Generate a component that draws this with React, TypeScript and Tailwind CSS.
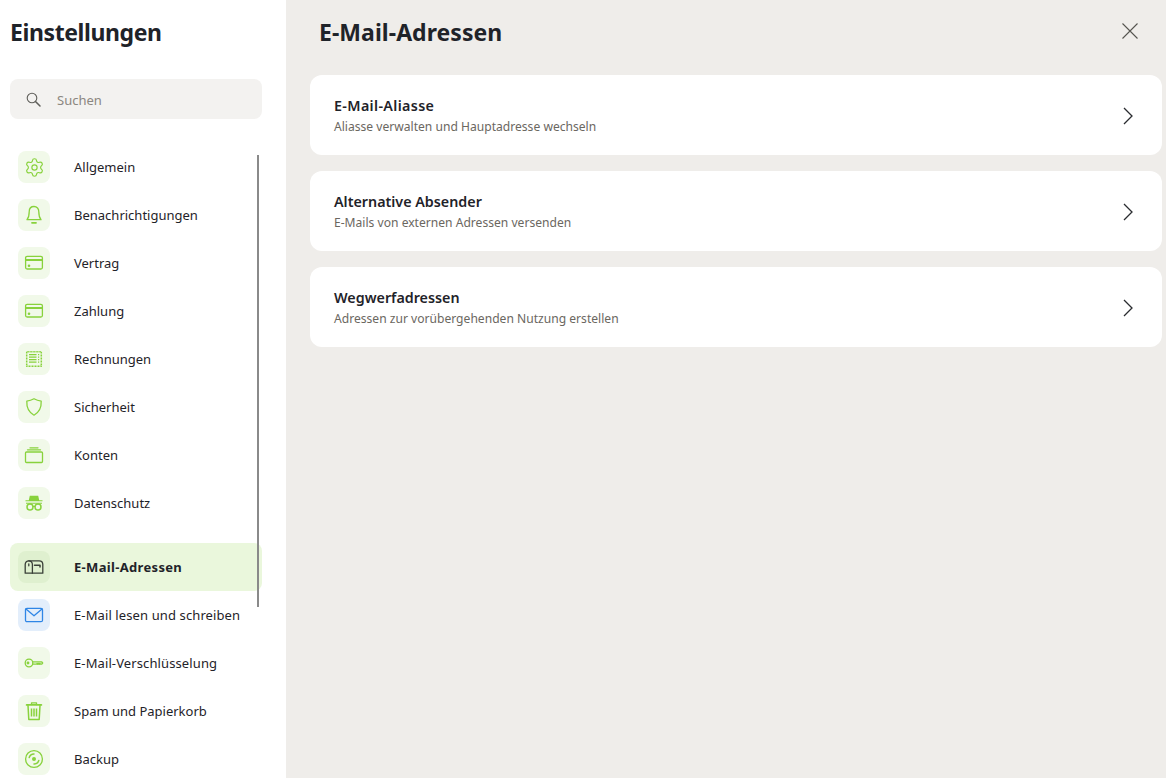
import React from "react";
import { Settings } from "lucide-react";

const G = "#88d23c";

const Svg = ({ children, stroke = G }: { children: React.ReactNode; stroke?: string }) => (
  <svg width="20" height="20" viewBox="0 0 20 20" fill="none" stroke={stroke} strokeWidth="1.300" strokeLinecap="round" strokeLinejoin="round">
    {children}
  </svg>
);

const Gear = () => <Settings size={21} color={G} strokeWidth={1.300} />;
const Bell = () => (
  <Svg>
    <path d="M10 1.500c-3 0-4.800 2.300-4.800 5.200 0 3.500-.5 5.900-2.200 8h14c-1.700-2.100-2.200-4.500-2.200-8 0-2.900-1.800-5.200-4.800-5.200z" />
    <path d="M8 17.800h4" strokeWidth="1.800" />
  </Svg>
);
const Card = () => (
  <Svg>
    <rect x="1.600" y="3.300" width="16.800" height="12.700" rx="1.500" />
    <path d="M1.600 7h16.800" strokeWidth="2" strokeLinecap="butt" />
    <circle cx="5" cy="12.800" r="1.300" fill={G} stroke="none" />
  </Svg>
);
const Invoice = () => (
  <Svg>
    <rect x="2.700" y="2.700" width="14.600" height="14.600" strokeDasharray="1 .5" strokeLinecap="butt" strokeWidth="1.500" />
    <path d="M5 5.700h7.500M5 8.200h7.500M5 10.700h7.500M5 13.200h7.500M14 5.700h1.200M14 8.200h1.200M14 10.700h1.200M14 13.200h1.200" strokeLinecap="butt" strokeWidth="1.300" />
  </Svg>
);
const Shield = () => (
  <Svg>
    <path d="M10 1.800c2.500 1.500 4.800 2.100 7.200 2.300.3 6.400-1.600 11-7.200 14.100C4.400 15.100 2.500 10.500 2.800 4.100 5.200 3.900 7.500 3.300 10 1.800z" />
  </Svg>
);
const Stack = () => (
  <Svg>
    <rect x="1.500" y="7" width="17" height="10.500" rx="1" />
    <path d="M3.500 4.800h13M6 2.800h8" />
  </Svg>
);
const Spy = () => (
  <svg width="20" height="20" viewBox="0 0 20 20" fill="none">
    <path d="M5.800 2.800h8.400l1 4.400h3.300v1.100H1.500V7.200h3.300z" fill={G} />
    <circle cx="6" cy="14" r="3" stroke={G} strokeWidth="1.500" />
    <circle cx="14" cy="14" r="3" stroke={G} strokeWidth="1.500" />
    <path d="M9 13.500h2M2 10.300h16" stroke={G} strokeWidth="1.100" />
  </svg>
);
const Mailbox = () => (
  <Svg stroke="#3a4038">
    <path d="M1.200 16.200V7.500c0-2.300 1.700-3.700 3.600-3.700h10.400c1.900 0 3.600 1.400 3.600 3.700v8.700z" />
    <path d="M8.400 16.200V7.500c0-2.300-1.700-3.700-3.600-3.700" />
    <path d="M4.800 7v1.800" />
    <path d="M10.500 8.200h5.500v1.900" strokeWidth="1.500" />
  </Svg>
);
const Mail = () => (
  <Svg stroke="#2f86e6">
    <rect x="1.500" y="3.300" width="17" height="13.400" rx="1.500" />
    <path d="M2 4l8 6.800L18 4" />
  </Svg>
);
const Key = () => (
  <Svg>
    <circle cx="5" cy="10" r="3.800" />
    <path d="M8.800 8.800h8.800l1.100 1.200-1.100 1.200h-1l-.7-.7-.7.7-.7-.7-.7.7-.7-.7-.7.7H8.800" />
    <circle cx="4" cy="10" r=".8" />
  </Svg>
);
const Trash = () => (
  <Svg>
    <path d="M2.600 3.900h14.800" strokeWidth="1.700" />
    <path d="M7.500 3.500V1.800h5v1.700" />
    <path d="M4 4.500l.8 14h10.400l.8-14" strokeWidth="1.500" />
    <path d="M7.500 7.500v8M10 7.500v8M12.500 7.500v8" strokeWidth="1.500" strokeLinecap="butt" />
  </Svg>
);
const Disc = () => (
  <Svg>
    <circle cx="10" cy="10" r="8.400" />
    <circle cx="10" cy="10" r="2" fill={G} stroke="none" />
    <path d="M5.200 8.500A5 5 0 0 1 10 5M14.800 11.500A5 5 0 0 1 10 15" strokeWidth="1.500" />
  </Svg>
);

type Item = { label: string; icon: React.ReactNode; wide?: boolean };

const groupA: Item[] = [
  { label: "Allgemein", icon: <Gear /> },
  { label: "Benachrichtigungen", icon: <Bell /> },
  { label: "Vertrag", icon: <Card /> },
  { label: "Zahlung", icon: <Card /> },
  { label: "Rechnungen", icon: <Invoice /> },
  { label: "Sicherheit", icon: <Shield /> },
  { label: "Konten", icon: <Stack /> },
  { label: "Datenschutz", icon: <Spy /> },
];

const groupB: Item[] = [
  { label: "E-Mail-Adressen", icon: <Mailbox /> },
  { label: "E-Mail lesen und schreiben", icon: <Mail />, wide: true },
  { label: "E-Mail-Verschlüsselung", icon: <Key />, wide: true },
  { label: "Spam und Papierkorb", icon: <Trash /> },
  { label: "Backup", icon: <Disc /> },
];

const Row = ({ item, active, blue }: { item: Item; active?: boolean; blue?: boolean }) => (
  <div className={`flex h-12 shrink-0 items-center gap-6 rounded-lg px-2 ${active ? "bg-[#eaf7dc]" : ""}`}>
    <div
      className={`flex h-8 w-8 shrink-0 items-center justify-center rounded-lg ${
        active ? "bg-[#dff0cf]" : blue ? "bg-[#e3eefb]" : "bg-[#f1f9e9]"
      }`}
    >
      {item.icon}
    </div>
    <span
      className={`pt-0.5 text-[13px] text-[#1f2329] ${active ? "font-bold tracking-[0.33px]" : ""} ${
        item.wide ? "tracking-[0.11px]" : ""
      }`}
    >
      {item.label}
    </span>
  </div>
);

const entries = [
  { t: "E-Mail-Aliasse", s: "Aliasse verwalten und Hauptadresse wechseln", w: "tracking-[0.35px]" },
  { t: "Alternative Absender", s: "E-Mails von externen Adressen versenden", w: "" },
  { t: "Wegwerfadressen", s: "Adressen zur vorübergehenden Nutzung erstellen", w: "" },
];

export default function App() {
  return (
    <div className="flex h-[778px] w-[1166px] overflow-hidden bg-[#efedea] font-['Noto_Sans',sans-serif]">
      <aside className="relative flex w-[286px] shrink-0 flex-col overflow-hidden bg-white pr-6 pl-2.5">
        <h1 className="mt-[15px] h-[34px] text-[23px] leading-[34px] font-bold tracking-[-0.4px] text-[#1f2329]">
          Einstellungen
        </h1>
        <div className="mt-[30px] flex h-10 shrink-0 items-center gap-4 rounded-lg bg-[#f3f2f0] pl-4">
          <svg width="15" height="15" viewBox="0 0 15 15" fill="none" stroke="#5f5f5a" strokeWidth="1.100" strokeLinecap="round">
            <circle cx="6" cy="6" r="4.800" />
            <path d="M9.500 9.500l4.500 4.500" strokeWidth="1.500" />
          </svg>
          <span className="pt-1 text-[13px] text-[#8b8780]">Suchen</span>
        </div>
        <nav className="mt-6 flex flex-col">
          {groupA.map((i) => (
            <Row key={i.label} item={i} />
          ))}
          <div className="h-4 shrink-0" />
          {groupB.map((i, n) => (
            <Row key={i.label} item={i} active={n === 0} blue={n === 1} />
          ))}
        </nav>
        <div className="absolute top-[155px] left-[257px] h-[452px] w-0.5 bg-[#8a8a8a]" />
      </aside>
      <main className="flex min-w-0 flex-1 flex-col pr-1 pl-6">
        <header className="flex h-[75px] shrink-0 items-start justify-between pt-[15px]">
          <h2 className="h-[34px] pl-[9px] text-[23px] leading-[34px] font-bold tracking-[0.05px] text-[#1f2329]">
            E-Mail-Adressen
          </h2>
          <svg className="mt-[8px] mr-6" width="16" height="16" viewBox="0 0 16 16" fill="none" stroke="#55554f" strokeWidth="1.100">
            <path d="M.5 .5l15 15M15.500 .5l-15 15" />
          </svg>
        </header>
        <div className="flex flex-col gap-4">
          {entries.map((e) => (
            <div key={e.t} className="flex h-20 items-center justify-between rounded-xl bg-white pr-[29px] pl-6">
              <div className="flex flex-col pt-0.5">
                <span className={`text-[14.3px] leading-[21px] font-semibold text-[#1f2329] ${e.w}`}>{e.t}</span>
                <span className="text-[12.1px] leading-[21px] text-[#6b675f]">{e.s}</span>
              </div>
              <svg className="mt-0.5" width="10" height="18" viewBox="0 0 10 18" fill="none" stroke="#2a2c30" strokeWidth="1.300">
                <path d="M1 1l8 8-8 8" />
              </svg>
            </div>
          ))}
        </div>
      </main>
    </div>
  );
}
